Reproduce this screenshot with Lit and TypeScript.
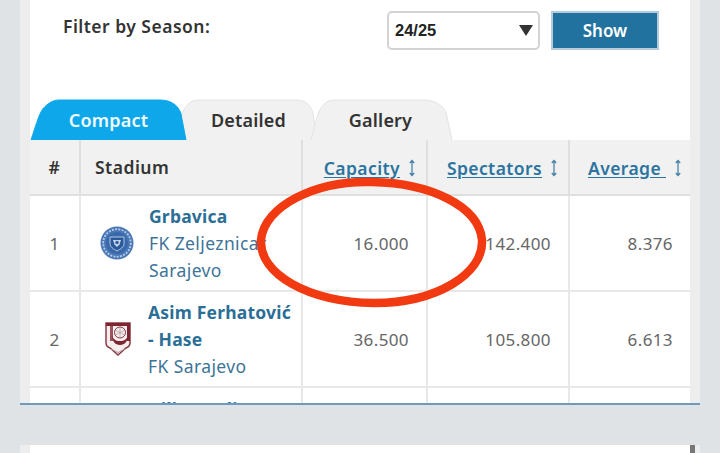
import { LitElement, html, css, svg } from "lit";
import { customElement } from "lit/decorators.js";

const sortIcon = html`<svg class="sort" width="8" height="18" viewBox="0 0 8 18" aria-hidden="true"><path d="M4 1.500V16.500M1.800 4 4 1.500 6.200 4M1.800 14 4 16.500 6.200 14" fill="none" stroke="#3f7ea6" stroke-width="1.200"/></svg>`;

const blueCrest = html`<svg class="crest" width="34" height="34" viewBox="0 0 34 34" aria-hidden="true">
  <circle cx="17" cy="17" r="16.500" fill="#4a78b6"/>
  <circle cx="17" cy="17" r="13.800" fill="none" stroke="#b4cbe6" stroke-width="1.800" stroke-dasharray="2 1.300"/>
  <circle cx="17" cy="17" r="11" fill="#3a69ab"/>
  <path d="M10 11h14v6.500c0 3.500-3.500 5.500-7 7.500-3.500-2-7-4-7-7.500z" fill="#2a5898" stroke="#c3d4ea" stroke-width=".9"/>
  <path d="M13 14h8l-1.500 4.500L17 21l-2.500-2.500z" fill="#c7d8ec"/>
  <circle cx="17" cy="16.500" r="1.800" fill="#35639f"/>
</svg>`;

const maroonCrest = html`<svg class="crest" width="26" height="34" viewBox="0 0 26 34" aria-hidden="true">
  <path d="M1 1h24v20c0 3-1.500 4-4 5L13 33 5 26c-2.500-1-4-2-4-5z" fill="#f6eeee" stroke="#8a3d46" stroke-width="1.500"/>
  <path d="M1 1h24v3H1z" fill="#7d2530"/>
  <path d="M5 4h3v15H5z" fill="#9b565d"/>
  <path d="M22 4h3v15h-3z" fill="#7d2530"/>
  <path d="M7 13c0 6 3 10 8 10s8-4 8-10c-1 4-3.500 6-8 6s-7-2-8-6z" fill="#7d2530"/>
  <circle cx="15" cy="10.500" r="5.500" fill="#f3ecec" stroke="#7d2530" stroke-width=".9"/>
  <path d="M15 5v11M10.200 8l9.600 5M19.800 8l-9.600 5" stroke="#b08a8d" stroke-width=".6"/>
  <path d="M6 27l7 3.500 7-3.500" fill="none" stroke="#b99598" stroke-width="1"/>
</svg>`;

const tabShape = (w: number, a: number, b: number, fill: string, stroke: string) => svg`
  <path d="M0 40C${a * 0.15} 28 ${a * 0.25} 16 ${a * 0.42} 9 ${a * 0.6} 3 ${a * 0.8} 0 ${a} 0H${w - b}C${w - b * 0.55} 0 ${w - b * 0.3} 6 ${w - b * 0.2} 13L${w} 40" fill="${fill}" stroke="${stroke}" stroke-width="1"/>`;

@customElement("app-root")
export class AppRoot extends LitElement {
  static styles = css`
    :host {
      display: block;
      position: relative;
      width: 720px;
      height: 453px;
      overflow: hidden;
      background: #dfe3e6;
      font-family: "Noto Sans", "Open Sans", sans-serif;
      color: #333;
    }
    .frame {
      margin: 0 20px;
      padding: 0 10px;
      background: #ededed;
      height: 403px;
      box-sizing: border-box;
    }
    .sheet {
      background: #fff;
      height: 403px;
      overflow: hidden;
    }
    .rule {
      height: 2px;
      margin: 0 20px;
      background: #6d9bc0;
    }
    .filter {
      display: flex;
      height: 100px;
      box-sizing: border-box;
      padding: 11px 31px 0 33px;
    }
    .filter label {
      font-size: 17.500px;
      font-weight: 600;
      letter-spacing: 0.48px;
      line-height: 30px;
      color: #333;
      flex: 1;
    }
    .select {
      width: 153px;
      height: 39px;
      box-sizing: border-box;
      border: 2px solid #d3d3d3;
      border-radius: 5px;
      display: flex;
      align-items: center;
      justify-content: space-between;
      padding: 0 5px 0 6px;
      font-family: "Liberation Sans", Arial, sans-serif;
      font-size: 16.500px;
      font-weight: 700;
      color: #222;
    }
    .show {
      width: 108px;
      height: 39px;
      margin-left: 11px;
      box-sizing: border-box;
      border: 2px solid #b5cbdc;
      background: #21729f;
      color: #fff;
      font: 600 17px "Noto Sans", sans-serif;
      padding: 0;
    }
    .tabs {
      display: flex;
      height: 40px;
      padding-left: 1px;
    }
    .tab {
      position: relative;
      display: flex;
      align-items: center;
      justify-content: center;
      font-size: 18px;
      font-weight: 600;
      letter-spacing: 0.2px;
      color: #333;
      height: 40px;
    }
    .tab svg {
      position: absolute;
      inset: 0;
      overflow: visible;
    }
    .tab span {
      position: relative;
    }
    .tab.compact {
      width: 155px;
      color: #f2fbff;
      z-index: 2;
    }
    .tab.detailed {
      width: 142px;
      margin-left: -11px;
      padding-left: 5px;
      box-sizing: border-box;
    }
    .tab.gallery {
      width: 141px;
      margin-left: -6px;
      padding-right: 2px;
      box-sizing: border-box;
    }
    table {
      width: 660px;
      border-collapse: collapse;
      table-layout: fixed;
      font-size: 17px;
    }
    th {
      height: 54px;
      padding: 0;
      background: #f1f1f1;
      font-size: 17.500px;
      font-weight: 600;
      letter-spacing: 0.5px;
      border-left: 2px solid #dfdfdf;
      border-bottom: 2px solid #dfdfdf;
    }
    th:first-child,
    td:first-child {
      border-left: 0;
    }
    th.name {
      text-align: left;
      padding-left: 14px;
    }
    th.num {
      text-align: right;
      color: #2b74a0;
    }
    .sortable {
      display: inline-flex;
      align-items: center;
      gap: 8px;
      vertical-align: middle;
    }
    .sortable a {
      color: #2b74a0;
      letter-spacing: 0.4px;
      text-decoration: underline;
      text-underline-offset: 2px;
    }
    td {
      height: 94px;
      padding: 0;
      border-left: 2px solid #e8e8e8;
      border-bottom: 2px solid #e8e8e8;
      color: #666;
      font-weight: 400;
      letter-spacing: 0.4px;
    }
    td.rank {
      text-align: center;
    }
    td.num {
      text-align: right;
      padding-right: 17px;
    }
    td.clipped {
      vertical-align: top;
      padding-top: 8px;
    }
    .stadium {
      display: flex;
      align-items: center;
      padding-left: 19px;
      gap: 15px;
    }
    .crest {
      flex: none;
      filter: blur(0.4px);
    }
    .crest.narrow {
      display: flex;
      margin: 0 3px 0 5px;
    }
    .row-two .info {
      margin-left: -1px;
    }
    .indent {
      padding-left: 68px;
    }
    .info {
      line-height: 27px;
      color: #3d7497;
      font-size: 17.500px;
      letter-spacing: 0.4px;
      width: 148px;
    }
    .info b {
      display: block;
      font-weight: 700;
      letter-spacing: 0.2px;
      color: #2b6e96;
    }
    .mark {
      position: absolute;
      left: 250px;
      top: 172px;
      pointer-events: none;
    }
    .next {
      margin: 40px 20px 0;
      padding: 0 10px;
      background: #ededed;
      height: 20px;
      position: relative;
    }
    .next div {
      background: #fff;
      height: 20px;
    }
    .thumb {
      position: absolute;
      right: 5px;
      top: 0;
      width: 5px;
      height: 10px;
      background: #777;
    }
  `;

  render() {
    return html`
      <div class="frame">
        <div class="sheet">
          <div class="filter">
            <label>Filter by Season:</label>
            <div class="select">
              <span>24/25</span>
              <svg width="14" height="11" viewBox="0 0 14 11" aria-hidden="true"><path d="M0 0h14L7 11z" fill="#333"/></svg>
            </div>
            <button class="show">Show</button>
          </div>
          <div class="tabs">
            <div class="tab compact">
              <svg width="155" height="40" viewBox="0 0 155 40" aria-hidden="true">${tabShape(155, 28, 26, "#0ea7ea", "#0ea7ea")}</svg>
              <span>Compact</span>
            </div>
            <div class="tab detailed">
              <svg width="142" height="40" viewBox="0 0 142 40" aria-hidden="true">${tabShape(142, 22, 20, "#f1f1f1", "#e4e4e4")}</svg>
              <span>Detailed</span>
            </div>
            <div class="tab gallery">
              <svg width="141" height="40" viewBox="0 0 141 40" aria-hidden="true">${tabShape(141, 22, 29, "#f1f1f1", "#e4e4e4")}</svg>
              <span>Gallery</span>
            </div>
          </div>
          <table>
            <colgroup>
              <col style="width:50px" /><col style="width:222px" /><col style="width:125px" /><col style="width:142px" /><col style="width:121px" />
            </colgroup>
            <thead>
              <tr>
                <th>#</th>
                <th class="name">Stadium</th>
                <th class="num"><span class="sortable" style="margin-right:10px"><a>Capacity</a>${sortIcon}</span></th>
                <th class="num"><span class="sortable" style="margin-right:10px"><a>Spectators</a>${sortIcon}</span></th>
                <th class="num"><span class="sortable" style="margin-right:8px"><a>Average&nbsp;</a>${sortIcon}</span></th>
              </tr>
            </thead>
            <tbody>
              <tr>
                <td class="rank">1</td>
                <td><div class="stadium">${blueCrest}<div class="info"><b>Grbavica</b>FK Zeljeznicar Sarajevo</div></div></td>
                <td class="num">16.000</td>
                <td class="num">142.400</td>
                <td class="num">8.376</td>
              </tr>
              <tr class="row-two">
                <td class="rank">2</td>
                <td><div class="stadium"><span class="crest narrow">${maroonCrest}</span><div class="info"><b>Asim Ferhatović - Hase</b>FK Sarajevo</div></div></td>
                <td class="num">36.500</td>
                <td class="num">105.800</td>
                <td class="num">6.613</td>
              </tr>
              <tr>
                <td class="rank"></td>
                <td class="clipped"><div class="stadium indent"><div class="info"><b>Bilino Polje</b></div></div></td>
                <td class="num"></td>
                <td class="num"></td>
                <td class="num"></td>
              </tr>
            </tbody>
          </table>
        </div>
      </div>
      <div class="rule"></div>
      <div class="next"><div></div><span class="thumb"></span></div>
      <svg class="mark" width="244" height="144" viewBox="0 0 244 144" aria-hidden="true">
        <path d="M122 10C66 8 14 34 11 68 9 102 58 130 124 131 186 131 234 102 232 68 229 34 180 11 122 10Z" fill="none" stroke="#f23a12" stroke-width="8.500"/>
      </svg>
    `;
  }
}
